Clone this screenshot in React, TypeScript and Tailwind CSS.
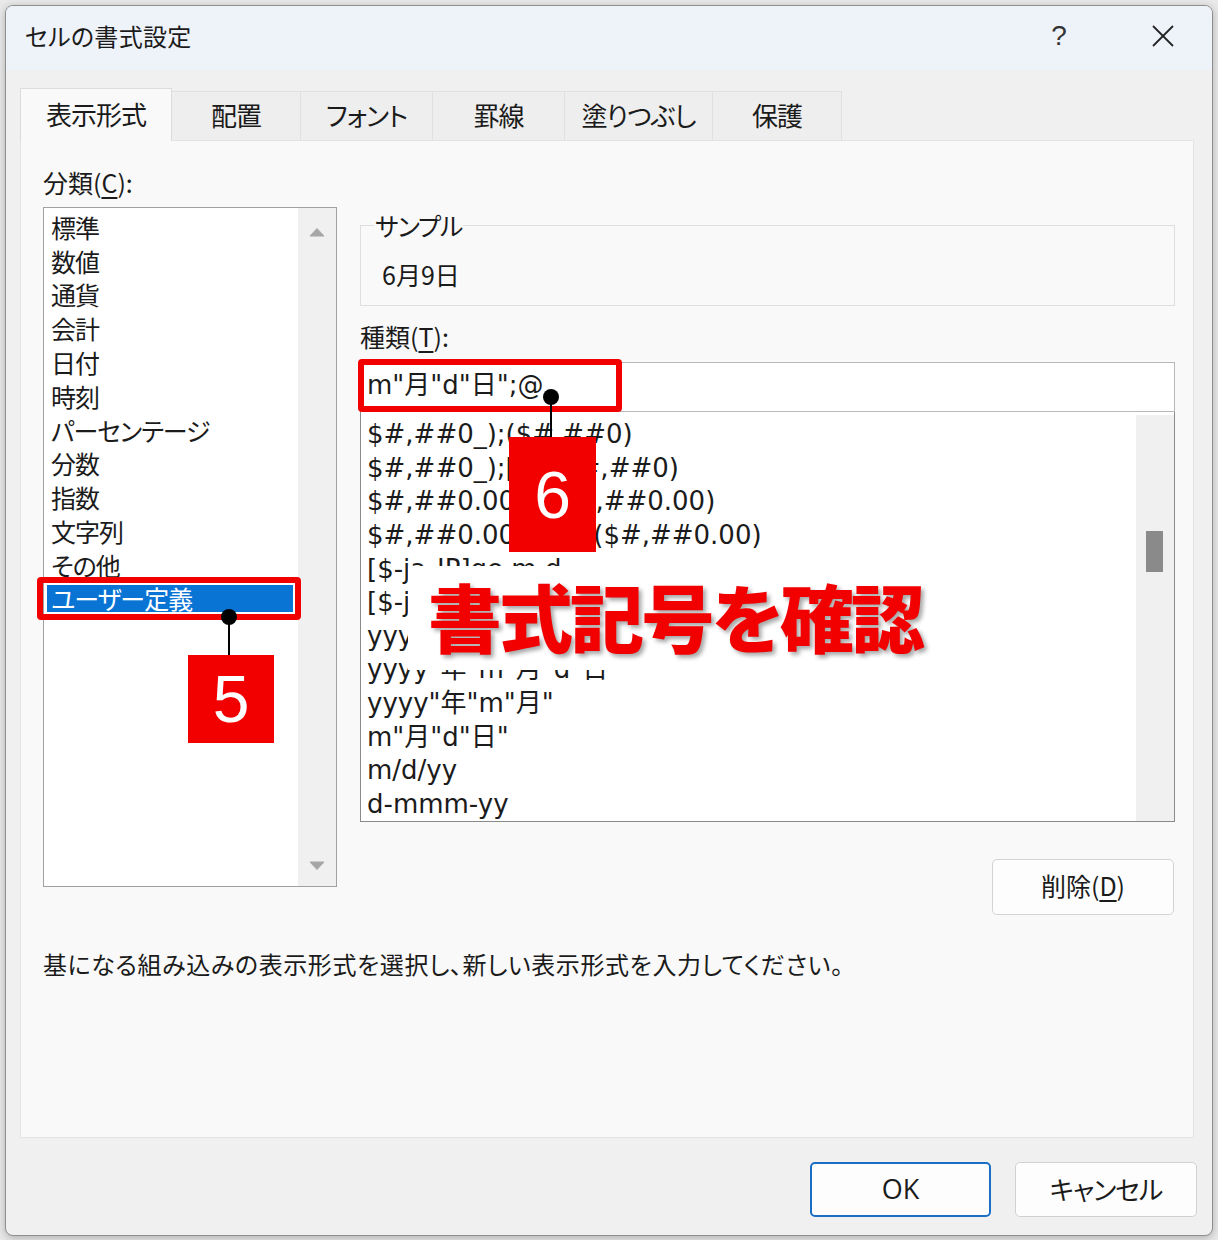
import React from "react";

const categories = [
  "標準",
  "数値",
  "通貨",
  "会計",
  "日付",
  "時刻",
  "パーセンテージ",
  "分数",
  "指数",
  "文字列",
  "その他",
  "ユーザー定義",
];

const formats = [
  "$#,##0_);($#,##0)",
  "$#,##0_);[赤]($#,##0)",
  "$#,##0.00_);($#,##0.00)",
  "$#,##0.00_);[赤]($#,##0.00)",
  "[$-ja-JP]ge.m.d",
  '[$-ja-JP]ggge"年"m"月"d"日"',
  "yyyy/m/d;@",
  'yyyy"年"m"月"d"日"',
  'yyyy"年"m"月"',
  'm"月"d"日"',
  "m/d/yy",
  "d-mmm-yy",
];

const tabs = [
  { label: "表示形式", cls: "w-[152px]", active: true },
  { label: "配置", cls: "w-[129px]" },
  { label: "フォント", cls: "w-[132px]" },
  { label: "罫線", cls: "w-[132px]" },
  { label: "塗りつぶし", cls: "w-[148px]" },
  { label: "保護", cls: "w-[129px]" },
];

function Arrow({ down }: { down?: boolean }) {
  return (
    <svg width="16" height="9" viewBox="0 0 16 9">
      <polygon
        points={down ? "1,1 15,1 8,8.5" : "8,0.5 15,8 1,8"}
        fill="#a6a6a6"
        strokeLinejoin="round"
        stroke="#a6a6a6"
        strokeWidth="1"
      />
    </svg>
  );
}

export default function App() {
  return (
    <div className="relative w-[1218px] h-[1240px] bg-[#e9e9e9] pt-[5px] pl-[5px] font-['Noto_Sans_CJK_JP',sans-serif] [font-feature-settings:'palt'] text-[#1b1b1b] overflow-hidden">
      <div className="w-[1208px] h-[1231px] rounded-[8px] border border-[#8e8e8e] bg-[#f0f0f0] overflow-hidden flex flex-col shadow-[0_2px_8px_rgba(0,0,0,0.25)]">
        {/* Title bar */}
        <div className="h-[64px] shrink-0 bg-[#eef2f9] flex items-center pl-[19px] pb-[5px]">
          <span className="text-[24px] leading-none tracking-[0.3px]">セルの書式設定</span>
          <span className="ml-auto w-[40px] text-center text-[28px] leading-none font-['Liberation_Sans'] text-[#333]">
            ?
          </span>
          <span className="ml-[64px] mr-[29px] w-[40px] flex justify-center">
            <svg width="24" height="24" viewBox="0 0 24 24">
              <line x1="2" y1="2" x2="22" y2="22" stroke="#222" strokeWidth="1.8" />
              <line x1="22" y1="2" x2="2" y2="22" stroke="#222" strokeWidth="1.8" />
            </svg>
          </span>
        </div>

        {/* Body */}
        <div className="flex-1 flex flex-col pl-[14px] pr-[18px] pt-[18px]">
          {/* Tabs */}
          <div className="flex items-end h-[52px]">
            {tabs.map((t) =>
              t.active ? (
                <div
                  key={t.label}
                  className={`${t.cls} relative z-10 h-[53px] -mb-px pb-[4px] bg-[#f9f9f9] border border-b-0 border-[#dcdcdc] flex items-center justify-center text-[26px] tracking-[-1px]`}
                >
                  {t.label}
                </div>
              ) : (
                <div
                  key={t.label}
                  className={`${t.cls} h-[49px] pb-[3px] bg-[#eeeeee] border-t border-r border-[#e0e0e0] flex items-center justify-center text-[26px] tracking-[-1px]`}
                >
                  {t.label}
                </div>
              )
            )}
          </div>

          {/* Panel */}
          <div className="h-[998px] bg-[#f9f9f9] border border-[#e3e3e3] pl-[22px] pt-[26px]">
            <div className="flex items-start">
              {/* Category */}
              <div className="w-[294px]">
                <div className="h-[32px] leading-[30px] text-[25px]">
                  分類(<span className="underline underline-offset-4">C</span>):
                </div>
                <div className="mt-[8px] h-[680px] border border-[#a0a0a0] bg-white flex">
                  <div className="flex-1 pt-[2px]">
                    {categories.map((c) => (
                      <div key={c} className="h-[33.8px] flex items-center">
                        {c === "ユーザー定義" ? (
                          <div className="ml-[3px] w-[246px] h-[27px] bg-[#0a74d4] text-white pl-[4px] text-[25px] leading-[26px] tracking-[-1px]">
                            {c}
                          </div>
                        ) : (
                          <div className="ml-[3px] pl-[4px] text-[25px] leading-[26px] tracking-[-1px]">{c}</div>
                        )}
                      </div>
                    ))}
                  </div>
                  <div className="w-[38px] bg-[#f0f0f0] flex flex-col items-center justify-between pt-[20px] pb-[16px]">
                    <Arrow />
                    <Arrow down />
                  </div>
                </div>
              </div>

              {/* Type */}
              <div className="ml-[23px] w-[815px] flex flex-col">
                <fieldset className="mt-[44px] h-[95px] border border-[#dedede]">
                  <legend className="ml-[13px] px-[1px] text-[25px] leading-[28px] tracking-[-1px]">サンプル</legend>
                  <div className="pl-[21px] pt-[20px] leading-[30px] text-[25px]">6月9日</div>
                </fieldset>
                <div className="mt-[15px] h-[32px] leading-[30px] text-[25px]">
                  種類(<span className="underline underline-offset-4">T</span>):
                </div>
                <div className="mt-[9px] h-[50px] border border-[#b8b8b8] bg-white flex items-center pl-[6px] pb-[3px] text-[26px] font-['DejaVu_Sans','Noto_Sans_CJK_JP',sans-serif]">
                  m"月"d"日";@
                </div>
                <div className="h-[410px] border border-t-0 border-[#8a8a8a] bg-white flex">
                  <div className="flex-1 pt-[6px] pl-[6px] text-[26px] font-['DejaVu_Sans','Noto_Sans_CJK_JP',sans-serif] overflow-hidden">
                    {formats.map((f) => (
                      <div key={f} className="h-[33.65px] leading-[33.65px] whitespace-nowrap">
                        {f}
                      </div>
                    ))}
                  </div>
                  <div className="w-[38px] mt-[3px] bg-[#f0f0f0]">
                    <div className="ml-[10px] mt-[116px] w-[17px] h-[41px] bg-[#8a8a8a]" />
                  </div>
                </div>
                <button className="mt-[37px] ml-auto mr-[1px] w-[182px] h-[56px] pb-[2px] rounded-[5px] border border-[#d3d3d3] bg-[#fdfdfd] text-[25px]">
                  削除(<span className="underline underline-offset-4">D</span>)
                </button>
              </div>
            </div>
            <div className="mt-[34px] text-[24px] leading-[30px] tracking-[0.6px]">
              基になる組み込みの表示形式を選択し、新しい表示形式を入力してください。
            </div>
          </div>

          {/* Buttons */}
          <div className="flex justify-end gap-[24px] mt-[24px] mr-[-3px]">
            <button className="w-[181px] h-[55px] rounded-[5px] border-2 border-[#1a6fc4] bg-[#fdfdfd] text-[27px] font-['Open_Sans',sans-serif]">
              OK
            </button>
            <button className="w-[182px] h-[55px] pb-[2px] rounded-[5px] border border-[#d0d0d0] bg-[#fdfdfd] text-[26px] tracking-[-1px]">
              キャンセル
            </button>
          </div>
        </div>
      </div>

      {/* Annotations */}
      <div className="absolute left-[37px] top-[577px] w-[264px] h-[43px] border-[6px] border-[#f20000] rounded-[4px]" />
      <div className="absolute left-[228px] top-[617px] w-[2px] h-[38px] bg-black" />
      <div className="absolute left-[221px] top-[609px] w-[16px] h-[16px] rounded-full bg-black" />
      <div className="absolute left-[188px] top-[655px] w-[86px] h-[88px] bg-[#f20000] flex items-center justify-center text-white text-[66px] leading-none font-['Liberation_Sans',sans-serif]">
        5
      </div>

      <div className="absolute left-[358px] top-[359px] w-[264px] h-[53px] border-[6px] border-[#f20000] rounded-[4px]" />
      <div className="absolute left-[550px] top-[397px] w-[2px] h-[40px] bg-black" />
      <div className="absolute left-[543px] top-[389px] w-[16px] h-[16px] rounded-full bg-black" />
      <div className="absolute left-[509px] top-[437px] w-[87px] h-[115px] bg-[#f20000] flex items-center justify-center text-white text-[66px] leading-none font-['Liberation_Sans',sans-serif]">
        6
      </div>

      <div className="absolute left-[408px] top-[566px] w-[532px] h-[104px] bg-white flex items-center pl-[20px] pb-[6px]">
        <span className="text-[74px] leading-none font-black tracking-[-3px] text-[#f20000] [text-shadow:3px_3px_4px_rgba(0,0,0,0.35)]">
          書式記号を確認
        </span>
      </div>
    </div>
  );
}
